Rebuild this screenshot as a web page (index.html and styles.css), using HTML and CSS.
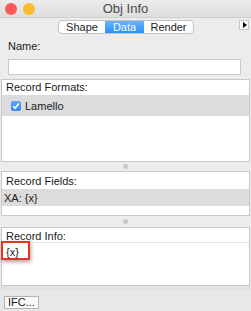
FILE: index.html
```html
<!DOCTYPE html>
<html lang="en">
<head>
    <meta charset="UTF-8">
    <title>Obj Info</title>
    <link rel="stylesheet" href="styles.css">
</head>
<body>
    <div class="window">
        <div class="titlebar">
            <span class="light red"></span>
            <span class="light yellow"></span>
            <span class="title">Obj Info</span>
        </div>
        <div class="toolbar">
            <div class="segmented">
                <span class="seg shape">Shape</span>
                <span class="seg data active">Data</span>
                <span class="seg render">Render</span>
            </div>
            <span class="menu-btn"><svg width="5" height="6" viewBox="0 0 5 6"><path d="M1 0 L5 3 L1 6 Z" fill="#000"/></svg></span>
        </div>
        <div class="name-block">
            <div class="label">Name:</div>
            <div class="input"></div>
        </div>
        <div class="panel formats">
            <div class="panel-head">Record Formats:</div>
            <div class="row">
                <span class="check"><svg width="8" height="8" viewBox="0 0 8 8"><path d="M1.2 4.2 L3.2 6.2 L6.8 1.6" fill="none" stroke="#fff" stroke-width="1.6"/></svg></span>
                Lamello
            </div>
        </div>
        <div class="splitter"><span class="dot"></span></div>
        <div class="panel fields">
            <div class="panel-head">Record Fields:</div>
            <div class="row">XA: {x}</div>
        </div>
        <div class="splitter tall"><span class="dot"></span></div>
        <div class="panel info">
            <div class="panel-head">Record Info:</div>
            <div class="textarea">
                {x}
                <span class="highlight"></span>
            </div>
        </div>
        <div class="footer">
            <span class="btn">IFC...</span>
        </div>
    </div>
</body>
</html>
```

FILE: styles.css
```css
* { box-sizing: border-box; }
body { margin: 0; font-family: "Liberation Sans", Arial, sans-serif; font-size: 11px; color: #1a1a1a; }
.window { width: 251px; height: 311px; background: #ececec; display: flex; flex-direction: column; overflow: hidden; }
.titlebar { height: 18px; flex: none; display: flex; align-items: center; position: relative; background: linear-gradient(#ececec, #dedede); border-bottom: 1px solid #cfcfcf; }
.light { width: 12px; height: 12px; border-radius: 50%; }
.light.red { background: #fc5b57; margin-left: 5px; }
.light.yellow { background: #fdbc30; margin-left: 6px; }
.title { position: absolute; left: 0; right: 0; text-align: center; font-size: 13px; color: #4a4a4a; }
.toolbar { height: 18px; flex: none; display: flex; align-items: flex-start; padding: 2px 0 0 58px; position: relative; }
.segmented { display: flex; background: #fff; border: 1px solid #c4c4c4; border-radius: 4px; height: 14px; overflow: hidden; }
.seg { display: flex; align-items: center; justify-content: center; font-size: 11px; color: #222; }
.seg.shape { width: 46px; }
.seg.data { width: 39px; }
.seg.render { width: 49px; }
.seg.active { background: linear-gradient(#6ab5fb, #2a8cf8); color: #fff; }
.menu-btn { position: absolute; right: 2px; top: 2px; width: 10px; height: 10px; border: 1px solid #c8c8c8; background: #f6f6f6; display: flex; align-items: center; justify-content: center; }
.name-block { height: 43px; padding: 3px 10px 0 8px; flex: none; }
.label { height: 15px; line-height: 15px; }
.input { height: 16px; margin-top: 5px; background: #fff; border: 1px solid #c8c8c8; }
.panel { background: #fff; border: 1px solid #c8c8c8; margin: 0 1px; flex: none; }
.panel-head { height: 15px; line-height: 15px; padding-left: 4px; }
.row { background: #dcdcdc; display: flex; align-items: center; padding-left: 2px; }
.formats { height: 83px; }
.formats .row { height: 21px; padding-left: 9px; gap: 4px; }
.check { width: 10px; height: 10px; border-radius: 2px; background: linear-gradient(#5aa8fb, #2f86f5); display: flex; align-items: center; justify-content: center; }
.fields { height: 45px; }
.fields .panel-head { height: 17px; line-height: 19px; }
.fields .row { height: 17px; }
.splitter { height: 9px; flex: none; display: flex; align-items: center; justify-content: center; }
.splitter.tall { height: 11px; }
.dot { width: 5px; height: 5px; border-radius: 50%; background: #c8c8c8; }
.info { height: 59px; }
.info .panel-head { height: 15px; line-height: 17px; border-bottom: 1px solid #e4e4e4; }
.textarea { position: relative; padding: 3px 4px; height: 42px; }
.highlight { position: absolute; left: -1px; top: -2px; width: 29px; height: 19px; border: 2px solid #e8331f; box-shadow: 1px 2px 4px rgba(0, 0, 0, 0.35); }
.footer { flex: 1; border-top: 4px solid #e2e2e2; background: #e8e8e8; padding: 6px 4px 0; }
.btn { display: inline-block; height: 13px; line-height: 11px; padding: 0 3px; background: #f9f9f9; border: 1px solid #b4b4b4; font-size: 11px; }
```
